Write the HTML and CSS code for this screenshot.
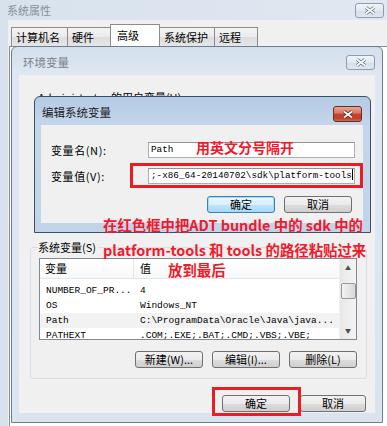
FILE: index.html
```html
<!DOCTYPE html>
<html lang="zh-CN">

<head>
    <meta charset="UTF-8">
    <meta name="viewport" content="width=device-width, initial-scale=1.0">
    <title>环境变量</title>
    <link rel="stylesheet" href="styles.css">
</head>

<body>
    <div class="desktop">

        <!-- 系统属性 -->
        <div class="window sysprops">
            <div class="titlebar">
                <span class="title">系统属性</span>
                <span class="close"><svg width="12" height="9" viewBox="0 0 12 9"><path d="M2 1.5L10 7.5M10 1.5L2 7.5" stroke="#5f6b78" stroke-width="3.4"/><path d="M2 1.5L10 7.5M10 1.5L2 7.5" stroke="#fff" stroke-width="1.8"/></svg></span>
            </div>
            <div class="client">
                <div class="tabs">
                    <span class="tab">计算机名</span>
                    <span class="tab">硬件</span>
                    <span class="tab active">高级</span>
                    <span class="tab">系统保护</span>
                    <span class="tab">远程</span>
                </div>
                <div class="tab-panel"></div>
            </div>
        </div>

        <!-- 环境变量 -->
        <div class="window envvars">
            <div class="titlebar">
                <span class="title">环境变量</span>
                <span class="close"><svg width="12" height="9" viewBox="0 0 12 9"><path d="M2 1.5L10 7.5M10 1.5L2 7.5" stroke="#5f6b78" stroke-width="3.4"/><path d="M2 1.5L10 7.5M10 1.5L2 7.5" stroke="#fff" stroke-width="1.8"/></svg></span>
            </div>
            <div class="content">
                <div class="user-label">Administrator 的用户变量(U)</div>

                <div class="group">
                    <div class="legend">系统变量(S)</div>
                    <div class="listbox">
                        <div class="list-body">
                            <div class="list-head">
                                <span class="col1">变量</span>
                                <span class="col2">值</span>
                            </div>
                            <div class="rows">
                                <div class="row"><span class="col1">NUMBER_OF_PR...</span><span class="col2">4</span></div>
                                <div class="row"><span class="col1">OS</span><span class="col2">Windows_NT</span></div>
                                <div class="row hover"><span class="col1">Path</span><span class="col2">C:\ProgramData\Oracle\Java\java...</span></div>
                                <div class="row"><span class="col1">PATHEXT</span><span class="col2">.COM;.EXE;.BAT;.CMD;.VBS;.VBE;</span></div>
                            </div>
                        </div>
                        <div class="scrollbar">
                            <span class="arrow">▲</span>
                            <span class="thumb"></span>
                            <span class="arrow down">▼</span>
                        </div>
                    </div>
                    <div class="btn-row">
                        <span class="btn">新建(W)...</span>
                        <span class="btn">编辑(I)...</span>
                        <span class="btn">删除(L)</span>
                    </div>
                </div>

                <div class="dialog-buttons">
                    <span class="btn">确定</span>
                    <span class="btn">取消</span>
                </div>
            </div>
        </div>

        <!-- 编辑系统变量 -->
        <div class="window editvar">
            <div class="titlebar">
                <span class="title">编辑系统变量</span>
                <span class="close red"><svg width="12" height="9" viewBox="0 0 12 9"><path d="M2 1.5L10 7.5M10 1.5L2 7.5" stroke="#5a1e14" stroke-width="3.4"/><path d="M2 1.5L10 7.5M10 1.5L2 7.5" stroke="#fff" stroke-width="1.8"/></svg></span>
            </div>
            <div class="content">
                <div class="fields">
                    <span class="label">变量名(N):</span>
                    <span class="input">Path</span>
                    <span class="label">变量值(V):</span>
                    <span class="input">;-x86_64-20140702\sdk\platform-tools<span class="caret"></span></span>
                </div>
                <div class="dialog-buttons">
                    <span class="btn default">确定</span>
                    <span class="btn">取消</span>
                </div>
            </div>
        </div>

        <!-- 标注 -->
        <div class="mark mark-value"></div>
        <div class="mark mark-ok"></div>
        <div class="note note-top">用英文分号隔开</div>
        <div class="note note-block">
            <div class="line1">在红色框中把ADT bundle 中的 sdk 中的</div>
            <div class="line2">platform-tools 和 tools 的路径粘贴过来</div>
            <div class="line3">放到最后</div>
        </div>

    </div>
</body>

</html>
```

FILE: styles.css
```css
* {
    box-sizing: border-box;
}

body {
    margin: 0;
    background-color: #f0f0f0;
    font-family: "Noto Sans CJK SC", "Liberation Sans", sans-serif;
    font-size: 11px;
    color: #000;
}

.desktop {
    position: relative;
    width: 387px;
    height: 426px;
    overflow: hidden;
}

/* windows */

.window {
    position: absolute;
}

.titlebar {
    display: flex;
    justify-content: space-between;
    align-items: flex-start;
}

.title {
    line-height: 14px;
}

.close {
    width: 29px;
    height: 15px;
    border: 1px solid #8d9cae;
    border-radius: 3px;
    background: linear-gradient(#f1f5f9, #e2e9f1 50%, #d6dfe9 51%, #e0e7ef);
    display: flex;
    align-items: center;
    justify-content: center;
}

.close.red {
    height: 16px;
    border-color: #6d2a1f;
    background: linear-gradient(#e6a795, #d47560 45%, #c2432c 50%, #c0402a 80%, #d06a50);
}

.sysprops {
    left: 0;
    top: 0;
    width: 392px;
    height: 440px;
    background: linear-gradient(90deg, #d8e2ed, #e0e8f1);
}

.sysprops .titlebar {
    height: 20px;
    padding: 0 8px 0 7px;
}

.sysprops .title {
    padding-top: 3px;
    color: #8a9098;
}

.sysprops .close {
    margin-top: 3px;
}

.sysprops .client {
    margin-left: 8px;
    height: 420px;
    background-color: #f0f0f0;
}

.tabs {
    display: flex;
    align-items: flex-end;
    padding: 7px 0 0 3px;
    height: 26px;
}

.tab {
    height: 19px;
    padding: 0 4px;
    line-height: 18px;
    font-size: 11px;
    white-space: nowrap;
    border: 1px solid #898c95;
    border-bottom: none;
    margin-right: -1px;
    background: linear-gradient(#f3f3f3, #ebebeb 50%, #dddddd 51%, #e6e6e6);
}

.tab:nth-child(1) { width: 57px; }
.tab:nth-child(2) { width: 45px; }
.tab:nth-child(3) { width: 50px; }
.tab:nth-child(4) { width: 56px; }
.tab:nth-child(5) { width: 44px; }

.tab.active {
    height: 22px;
    padding: 1px 0 0 6px;
    margin: 0 -1px;
    position: relative;
    z-index: 1;
    background: #fff;
}

.tab-panel {
    margin-left: 1px;
    height: 400px;
    border: 1px solid #898c95;
    background-color: #fff;
}

.envvars {
    left: 11px;
    top: 46px;
    width: 372px;
    height: 377px;
    border: 1px solid #6f7f90;
    border-radius: 6px 6px 0 0;
    background: linear-gradient(#d3dfec, #dfe8f2 28px, #dae4ef);
}

.envvars .titlebar {
    height: 28px;
    padding: 0 7px 0 11px;
}

.envvars .title {
    padding-top: 8px;
    color: #7b8189;
    font-size: 11.5px;
}

.envvars .close {
    margin-top: 8px;
}

.envvars > .content {
    margin: 0 7px;
    height: 338px;
    background-color: #f0f0f0;
    padding-top: 16px;
}

.user-label {
    margin-left: 19px;
    line-height: 12px;
    height: 12px;
}

/* group box */

.group {
    margin: 144px 0 0 11px;
    width: 337px;
    height: 132px;
    border: 1px solid #d5dfe5;
    border-radius: 3px;
    padding: 0 9px 0 8px;
}

.legend {
    width: max-content;
    margin: -7px 0 0 -1px;
    padding-right: 2px;
    line-height: 12px;
    background-color: #f0f0f0;
}

.listbox {
    display: flex;
    height: 82px;
    margin-top: 5px;
    border: 1px solid #828790;
    background-color: #fff;
    overflow: hidden;
}

.list-body {
    flex: 1;
    overflow: hidden;
}

.list-head {
    display: flex;
    height: 20px;
    line-height: 19px;
    border-bottom: 1px solid #e5e5e5;
    background: linear-gradient(#fff, #f7f8fa);
}

.list-head .col1 {
    border-right: 1px solid #e5e5e5;
}

.col1 {
    width: 94px;
    padding-left: 5px;
    flex-shrink: 0;
}

.col2 {
    padding-left: 6px;
    white-space: nowrap;
}

.rows {
    padding-top: 4px;
    font-family: "Liberation Mono", monospace;
    font-size: 9.5px;
}

.row {
    display: flex;
    height: 15px;
    line-height: 15px;
}

.row .col1 {
    padding-left: 6px;
}

.row.hover {
    background-color: #f2f2f2;
}

.scrollbar {
    width: 17px;
    display: flex;
    flex-direction: column;
    align-items: center;
    background: linear-gradient(90deg, #e8e8e8, #f4f4f4);
    border-left: 1px solid #f0f0f0;
}

.arrow {
    height: 17px;
    line-height: 17px;
    font-size: 6px;
    color: #4d4d4d;
}

.thumb {
    width: 15px;
    height: 16px;
    margin-top: 7px;
    border: 1px solid #979797;
    border-radius: 2px;
    background: linear-gradient(90deg, #f3f3f3, #e6e6e6 50%, #d8d8d8);
}

.arrow.down {
    margin-top: auto;
}

/* buttons */

.btn-row,
.dialog-buttons {
    display: flex;
    justify-content: flex-end;
}

.group .btn-row {
    margin-top: 11px;
    gap: 9px;
}

.btn {
    width: 68px;
    height: 17px;
    line-height: 15px;
    text-align: center;
    border: 1px solid #707070;
    border-radius: 3px;
    background: linear-gradient(#f2f2f2, #ebebeb 50%, #dddddd 51%, #cfcfcf);
}

.btn.default {
    border-color: #3c7fb1;
    background: linear-gradient(#eaf6fd, #d9f0fc 50%, #bee6fd 51%, #a7d9f5);
    box-shadow: inset 0 0 0 1px #a8d8f8;
}

.envvars .dialog-buttons {
    margin-top: 16px;
    padding-right: 9px;
    gap: 10px;
}

.envvars .dialog-buttons .btn:last-child {
    width: 66px;
}

/* edit dialog */

.editvar {
    left: 34px;
    top: 96px;
    width: 337px;
    height: 137px;
    border: 1px solid #3d5066;
    border-radius: 6px 6px 0 0;
    background: linear-gradient(#b4cbe4, #c4d6eb 28px, #c2d4ea);
}

.editvar .titlebar {
    height: 28px;
    padding: 0 8px 0 7px;
}

.editvar .title {
    padding-top: 8px;
    color: #1b1b1b;
    font-size: 11.5px;
}

.editvar .close {
    margin-top: 9px;
}

.editvar > .content {
    margin: 0 7px 0 6px;
    height: 98px;
    padding: 17px 11px 0 10px;
    background-color: #f0f0f0;
}

.fields {
    display: grid;
    grid-template-columns: 97px 207px;
    row-gap: 10px;
    align-items: center;
}

.label {
    letter-spacing: 0.6px;
}

.input {
    height: 16px;
    padding-left: 2px;
    line-height: 14px;
    border: 1px solid #abadb3;
    border-top-color: #8f9399;
    background-color: #fff;
    font-family: "Liberation Mono", monospace;
    font-size: 9.3px;
    white-space: nowrap;
    overflow: hidden;
}

.caret {
    display: inline-block;
    width: 1px;
    height: 11px;
    vertical-align: -2px;
    background-color: #000;
}

.editvar .dialog-buttons {
    margin-top: 12px;
    gap: 9px;
}

/* annotations */

.mark {
    position: absolute;
    border: 3px solid #ea1c24;
}

.mark-value {
    left: 130px;
    top: 163px;
    width: 233px;
    height: 25px;
}

.mark-ok {
    left: 212px;
    top: 387px;
    width: 89px;
    height: 29px;
}

.note {
    position: absolute;
    color: #f01a2c;
    font-weight: bold;
    font-size: 14.4px;
    line-height: 16px;
    white-space: nowrap;
}

.note-top {
    left: 196px;
    top: 139px;
    font-size: 14px;
}

.note-block {
    left: 103px;
    top: 217px;
}

.note-block .line2 {
    margin-top: 9px;
}

.note-block .line3 {
    margin-top: 4px;
    padding-left: 65px;
}
```
